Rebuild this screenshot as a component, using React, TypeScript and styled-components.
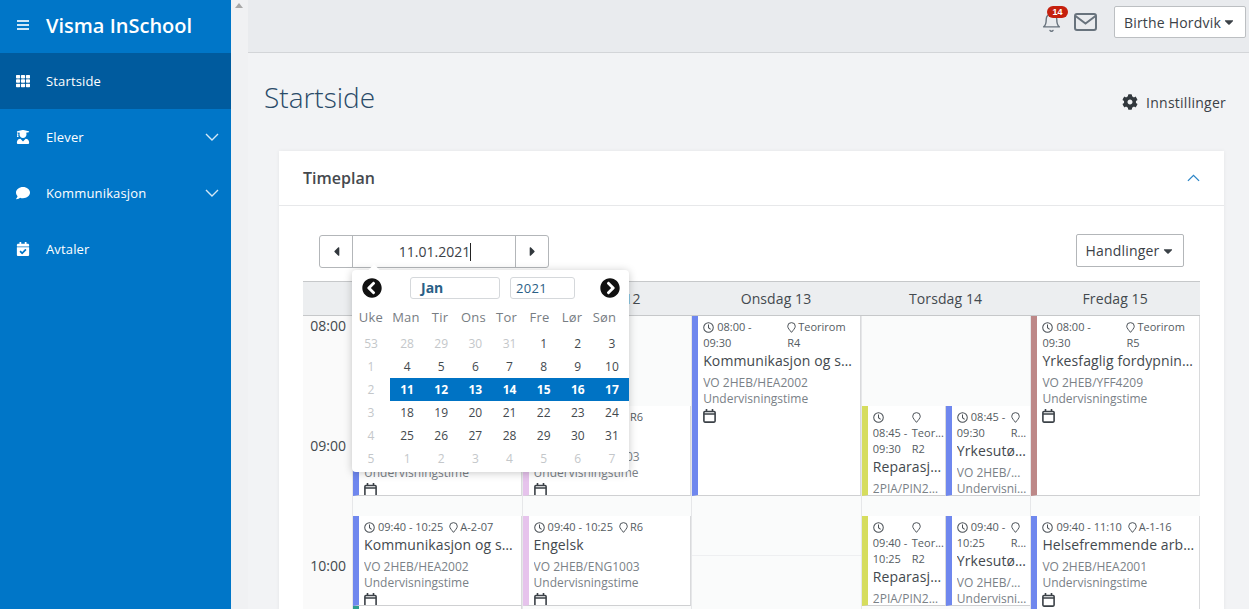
import React from "react";
import styled, { createGlobalStyle } from "styled-components";
import { FaTh, FaUserGraduate, FaComment, FaCalendarCheck, FaCog, FaChevronCircleLeft, FaChevronCircleRight, FaCaretDown, FaCaretLeft, FaCaretRight } from "react-icons/fa";
import { FiBell } from "react-icons/fi";

const GlobalStyle = createGlobalStyle`
  html, body { margin: 0; padding: 0; height: 100%; overflow: hidden; }
  body { font-family: "Open Sans", "Liberation Sans", sans-serif; color: #3b4147; background: #f2f3f5; }
  * { box-sizing: border-box; }
`;

const Shell = styled.div`display: flex; height: 609px; overflow: hidden;`;
const Sidebar = styled.nav`width: 231px; flex: none; background: #0076c8; color: #fff;`;
const Brand = styled.div`height: 53px; display: flex; align-items: center; padding: 0 0 3px 17px; gap: 17px; font-size: 20px; font-weight: 600;`;
const Burger = styled.span`
  width: 12px; height: 10px; display: block;
  border-top: 2px solid #cfe6f6; border-bottom: 2px solid #cfe6f6; position: relative;
  &::after { content: ""; position: absolute; left: 0; right: 0; top: 2px; height: 2px; background: #cfe6f6; }
`;
const NavItem = styled.div<{ $active?: boolean }>`
  height: 56px; display: flex; align-items: center; padding: 0 12px 0 16px; font-size: 13px; letter-spacing: .15px;
  background: ${(p) => (p.$active ? "#005b9e" : "transparent")};
`;
const NavIcon = styled.span`width: 14px; margin-right: 16px; display: flex; justify-content: center; font-size: 14px;`;
const NavLabel = styled.span`flex: 1;`;
const Track = styled.div`width: 17px; flex: none; background: #f0f1f3; padding: 3px 0 0 4px;`;
const TrackArrow = styled.span`display: block; width: 0; height: 0; border: 4px solid transparent; border-top: 0; border-bottom: 5px solid #a8a8a8;`;

const Main = styled.div`flex: 1; min-width: 0;`;
const TopBar = styled.header`height: 53px; background: #e9ebee; border-bottom: 1px solid #d3d5d8; display: flex; align-items: flex-start; justify-content: flex-end; padding: 6px 3px 0 0;`;
const BellWrap = styled.span`position: relative; width: 22px; margin-right: 11px; margin-top: 6px; color: #68737d; display: block; height: 24px;`;
const Badge = styled.span`position: absolute; top: -6px; left: 6px; width: 21px; height: 12px; border-radius: 6px; background: #c5200e; color: #fff; font: 700 9px/12px "Liberation Sans", sans-serif; text-align: center;`;
const MailIcon = styled.svg`width: 23px; height: 18px; margin: 7px 17px 0 0; fill: none; stroke: #68737d; stroke-width: 2;`;
const UserButton = styled.button`
  width: 132px; height: 32px; background: #fff; border: 1px solid #bcbfc2; border-radius: 2px; padding: 0;
  font: 500 14px "Open Sans", sans-serif; letter-spacing: .2px; color: #3b4147; display: flex; align-items: center; justify-content: center; gap: 1px;
`;
const PageHead = styled.div`height: 98px; display: flex; align-items: center; justify-content: space-between; padding: 0 23px 0 16px;`;
const PageTitle = styled.h1`margin: 0; padding-bottom: 10px; font-size: 28px; font-weight: 300; color: #2a4a68;`;
const Settings = styled.div`display: flex; align-items: center; gap: 8px; font-size: 14px; font-weight: 500; letter-spacing: .25px; color: #3b4147;`;

const Card = styled.section`margin: 0 25px 0 31px; background: #fff; box-shadow: 0 0 4px rgba(0,0,0,.06); height: 460px;`;
const CardHead = styled.div`height: 55px; border-bottom: 1px solid #e7e8ea; display: flex; align-items: center; justify-content: space-between; padding: 0 24px; font-size: 16px; font-weight: 600; color: #45494e;`;
const CardBody = styled.div`padding: 29px 24px 0; position: relative;`;
const Tools = styled.div`display: flex; justify-content: space-between; padding: 0 16px; height: 46px;`;
const DateNav = styled.div`display: flex; width: 230px; height: 33px; border: 1px solid #b3b6b9; border-radius: 3px;`;
const NavArrow = styled.span`width: 32px; display: flex; align-items: center; justify-content: center; font-size: 15px; color: #32383d;`;
const DateField = styled.span`flex: 1; border: solid #b3b6b9; border-width: 0 1px; display: flex; align-items: center; justify-content: center; padding-left: 2px; font-size: 14px; color: #3b4147;`;
const Caret = styled.span`display: inline-block; width: 1px; height: 18px; background: #222;`;
const ActionButton = styled.button`width: 108px; height: 33px; margin-top: -1px; background: #fff; border: 1px solid #b3b6b9; border-radius: 2px; padding: 0; font: 500 14px "Open Sans", sans-serif; letter-spacing: .2px; color: #3b4147; display: flex; align-items: center; justify-content: center; gap: 1px;`;

const Schedule = styled.div`display: grid; grid-template-columns: 49px repeat(5, 1fr); width: 897px;`;
const HeadCell = styled.div`height: 35px; background: #eceef0; border-top: 1px solid #c6c8ca; border-bottom: 1px solid #c6c8ca; display: flex; align-items: center; justify-content: center; font-size: 14px; letter-spacing: .1px; color: #43494e;`;
const TimeColumn = styled.div`height: 294px; background: #fafafa; overflow: hidden; display: flex; flex-direction: column; align-items: flex-end; padding: 0 6px 0 0;`;
const TimeLabel = styled.span`flex: none; height: 120px; font-size: 14px; line-height: 20px; color: #43494e;`;
const DayColumn = styled.div`
  height: 294px; position: relative; overflow: hidden; border-left: 1px solid #e6e7e9; background-color: #fafbfb;
  background-image: repeating-linear-gradient(to bottom, transparent 0, transparent 119px, #eeeff1 119px, #eeeff1 120px);
`;
const EventBox = styled.article<{ $color: string }>`
  position: absolute; overflow: hidden; background: #fff; border-left: 6px solid ${(p) => p.$color};
  border-right: 1px solid #d9dadc; border-bottom: 1px solid #cfd0d2; padding: 3px 2px 0 5px;
`;
const MetaRow = styled.div<{ $gap: number }>`display: flex; gap: ${(p) => p.$gap}px; font-size: 11px; line-height: 16px; color: #555c62;`;
const TimeBlock = styled.div<{ $width?: number }>`flex: ${(p) => (p.$width ? `0 0 ${p.$width}px` : "0 0 auto")}; min-width: 0;`;
const PlaceBlock = styled.div`flex: 1; min-width: 0;`;
const PlaceLine = styled.span`
  display: inline-block; white-space: nowrap; vertical-align: top;
  & + & { display: block; }
`;
const ClockIcon = styled.svg`width: 11px; height: 11px; margin-right: 3px; vertical-align: -1.5px; fill: none; stroke: #4a5056; stroke-width: 1.1;`;
const PinIcon = styled.svg`width: 9px; height: 11px; margin-right: 2px; vertical-align: -1.5px; fill: none; stroke: #4a5056; stroke-width: 1.1;`;
const EventTitle = styled.div`font-size: 14px; line-height: 20px; color: #43494e; white-space: nowrap; overflow: hidden; text-overflow: ellipsis; margin-bottom: 4px; letter-spacing: .1px;`;
const EventSub = styled.div`font-size: 12px; line-height: 16px; color: #7a8187; white-space: nowrap; overflow: hidden; text-overflow: ellipsis;`;
const CalIcon = styled.svg`display: block; width: 13px; height: 14px; margin-top: 2px; fill: none; stroke: #3b4147; stroke-width: 1.6;`;

const Popup = styled.div`position: absolute; left: 73px; top: 64px; width: 277px; height: 202px; background: #fff; border-radius: 4px; box-shadow: 0 1px 8px rgba(0,0,0,.22); z-index: 5; color: #43494e;
  &::before { content: ""; position: absolute; top: -4px; left: 18px; width: 8px; height: 8px; background: #fff; transform: rotate(45deg); }
`;
const PopHead = styled.div`height: 34px; display: flex; align-items: center; padding: 2px 8px 0 10px; font-size: 20px; color: #111;`;
const MonthBox = styled.span`flex: none; width: 90px; height: 22px; margin-left: 28px; border: 1px solid #d5d8db; border-radius: 3px; font-size: 14px; font-weight: 700; color: #2b5f86; line-height: 20px; padding-left: 10px;`;
const YearBox = styled.span`flex: none; width: 65px; height: 22px; margin-left: 10px; margin-right: 25px; border: 1px solid #d5d8db; border-radius: 3px; font-size: 13px; color: #2b5f86; line-height: 20px; padding-left: 5px; letter-spacing: .3px;`;
const WeekHead = styled.div`display: grid; grid-template-columns: 36px 34px 34px 33px 33px 33px 32px 33px; padding-left: 1px; height: 25px; align-items: center; font-size: 13px; letter-spacing: .25px; color: #777d83; text-align: center; padding-top: 1px;`;
const Weeks = styled.div`padding-top: 3px;`;
const WeekRow = styled.div`display: grid; grid-template-columns: 38px repeat(7, 1fr); height: 23px; align-items: center; text-align: center; font-size: 12px;`;
const WeekNo = styled.span`color: #c4c7ca;`;
const DayCell = styled.span<{ $muted?: boolean; $sel?: boolean }>`
  height: 23px; line-height: 23px;
  color: ${(p) => (p.$sel ? "#fff" : p.$muted ? "#c4c7ca" : "#43494e")};
  background: ${(p) => (p.$sel ? "#0073c4" : "transparent")};
  font-weight: ${(p) => (p.$sel ? 700 : 400)};
`;

const Chevron = ({ up, color, size = 14 }: { up?: boolean; color: string; size?: number }) => (
  <svg width={size} height={size * 0.6} viewBox="0 0 14 8" fill="none" stroke={color} strokeWidth="1.4">
    <path d={up ? "M1 7.2 7 1.2l6 6" : "M1 .8l6 6 6-6"} />
  </svg>
);
const Clock = () => (
  <ClockIcon viewBox="0 0 12 12"><circle cx="6" cy="6" r="5.2" /><path d="M6 2.6V6.2L8.3 8" /></ClockIcon>
);
const Pin = () => (
  <PinIcon viewBox="0 0 10 12"><path d="M5 11.4C3.2 9 .8 6.8.8 4.6a4.2 4 0 0 1 8.4 0C9.2 6.8 6.8 9 5 11.4z" /></PinIcon>
);
const Cal = () => (
  <CalIcon viewBox="0 0 13 14"><rect x=".9" y="2.5" width="11.2" height="10.6" rx="1" /><path d="M.9 5h11.2M3.5 0v3M9.5 0v3" /></CalIcon>
);

type Ev = { start: number; end: number; color: string; time: string; place: string[]; title: string; code: string; timeWidth?: number; gap?: number; left?: string; width?: string };
const BLUE = "#6f87ee";
const days: { name: string; events: Ev[] }[] = [
  { name: "Mandag 11", events: [
    { start: 45, end: 90, color: BLUE, time: "08:45 - 09:30", place: ["A-2-07"], title: "Kommunikasjon og samhandling", code: "VO 2HEB/HEA2002" },
    { start: 100, end: 145, color: BLUE, time: "09:40 - 10:25", place: ["A-2-07"], title: "Kommunikasjon og samhandling", code: "VO 2HEB/HEA2002" },
    { start: 145, end: 190, color: "#2f9e8f", time: "10:25 - 11:10", place: ["A-2-07"], title: "Kommunikasjon og samhandling", code: "VO 2HEB/HEA2002" },
  ] },
  { name: "Tirsdag 12", events: [
    { start: 45, end: 90, color: "#e6c3ec", time: "08:45 - 09:30", place: ["R6"], title: "Engelsk", code: "VO 2HEB/ENG1003" },
    { start: 100, end: 145, color: "#e6c3ec", time: "09:40 - 10:25", place: ["R6"], title: "Engelsk", code: "VO 2HEB/ENG1003" },
  ] },
  { name: "Onsdag 13", events: [
    { start: 0, end: 90, color: BLUE, time: "08:00 - 09:30", place: ["Teorirom", "R4"], title: "Kommunikasjon og samhandling", code: "VO 2HEB/HEA2002", timeWidth: 76, gap: 8 },
  ] },
  { name: "Torsdag 14", events: [
    { start: 45, end: 90, color: "#d6dd5e", time: "08:45 - 09:30", place: ["Teor...", "R2"], title: "Reparasjon av kjøretøy", code: "2PIA/PIN2001", timeWidth: 36, gap: 3, width: "84px" },
    { start: 45, end: 90, color: BLUE, time: "08:45 - 09:30", place: ["R..."], title: "Yrkesutøvelse", code: "VO 2HEB/...", timeWidth: 52, gap: 2, left: "84px", width: "86px" },
    { start: 100, end: 145, color: "#d6dd5e", time: "09:40 - 10:25", place: ["Teor...", "R2"], title: "Reparasjon av kjøretøy", code: "2PIA/PIN2001", timeWidth: 36, gap: 3, width: "84px" },
    { start: 100, end: 145, color: BLUE, time: "09:40 - 10:25", place: ["R..."], title: "Yrkesutøvelse", code: "VO 2HEB/...", timeWidth: 52, gap: 2, left: "84px", width: "86px" },
  ] },
  { name: "Fredag 15", events: [
    { start: 0, end: 90, color: "#bd8888", time: "08:00 - 09:30", place: ["Teorirom", "R5"], title: "Yrkesfaglig fordypning 2", code: "VO 2HEB/YFF4209", timeWidth: 76, gap: 8 },
    { start: 100, end: 190, color: BLUE, time: "09:40 - 11:10", place: ["A-1-16"], title: "Helsefremmende arbeid", code: "VO 2HEB/HEA2001" },
  ] },
];

const calendar: { week: number; days: [number, boolean][]; sel?: boolean }[] = [
  { week: 53, days: [[28, true], [29, true], [30, true], [31, true], [1, false], [2, false], [3, false]] },
  { week: 1, days: [4, 5, 6, 7, 8, 9, 10].map((d) => [d, false] as [number, boolean]) },
  { week: 2, sel: true, days: [11, 12, 13, 14, 15, 16, 17].map((d) => [d, false] as [number, boolean]) },
  { week: 3, days: [18, 19, 20, 21, 22, 23, 24].map((d) => [d, false] as [number, boolean]) },
  { week: 4, days: [25, 26, 27, 28, 29, 30, 31].map((d) => [d, false] as [number, boolean]) },
  { week: 5, days: [1, 2, 3, 4, 5, 6, 7].map((d) => [d, true] as [number, boolean]) },
];

export default function App() {
  return (
    <Shell>
      <GlobalStyle />
      <Sidebar>
        <Brand><Burger />Visma InSchool</Brand>
        <NavItem $active><NavIcon><FaTh /></NavIcon><NavLabel>Startside</NavLabel></NavItem>
        <NavItem><NavIcon><FaUserGraduate /></NavIcon><NavLabel>Elever</NavLabel><Chevron color="#d4e8f6" /></NavItem>
        <NavItem><NavIcon><FaComment /></NavIcon><NavLabel>Kommunikasjon</NavLabel><Chevron color="#d4e8f6" /></NavItem>
        <NavItem><NavIcon><FaCalendarCheck /></NavIcon><NavLabel>Avtaler</NavLabel></NavItem>
      </Sidebar>
      <Track><TrackArrow /></Track>
      <Main>
        <TopBar>
          <BellWrap><FiBell size={21} strokeWidth={1.6} /><Badge>14</Badge></BellWrap>
          <MailIcon viewBox="0 0 23 18"><rect x="1" y="1" width="21" height="16" rx="2" /><path d="M1.5 3l10 7.5 10-7.5" /></MailIcon>
          <UserButton>Birthe Hordvik<FaCaretDown size={14} /></UserButton>
        </TopBar>
        <PageHead>
          <PageTitle>Startside</PageTitle>
          <Settings><FaCog size={16} color="#32383d" />Innstillinger</Settings>
        </PageHead>
        <Card>
          <CardHead>Timeplan<Chevron up color="#2b85c7" size={13} /></CardHead>
          <CardBody>
            <Tools>
              <DateNav>
                <NavArrow><FaCaretLeft /></NavArrow>
                <DateField>11.01.2021<Caret /></DateField>
                <NavArrow><FaCaretRight /></NavArrow>
              </DateNav>
              <ActionButton>Handlinger<FaCaretDown size={14} /></ActionButton>
            </Tools>
            <Popup>
              <PopHead>
                <FaChevronCircleLeft />
                <MonthBox>Jan</MonthBox>
                <YearBox>2021</YearBox>
                <FaChevronCircleRight />
              </PopHead>
              <WeekHead>
                {["Uke", "Man", "Tir", "Ons", "Tor", "Fre", "Lør", "Søn"].map((d) => <span key={d}>{d}</span>)}
              </WeekHead>
              <Weeks>
                {calendar.map((w) => (
                  <WeekRow key={w.week}>
                    <WeekNo>{w.week}</WeekNo>
                    {w.days.map(([d, muted]) => <DayCell key={d} $muted={muted} $sel={w.sel}>{d}</DayCell>)}
                  </WeekRow>
                ))}
              </Weeks>
            </Popup>
            <Schedule>
              <HeadCell />
              {days.map((d) => <HeadCell key={d.name}>{d.name}</HeadCell>)}
              <TimeColumn>
                <TimeLabel>08:00</TimeLabel>
                <TimeLabel>09:00</TimeLabel>
                <TimeLabel>10:00</TimeLabel>
              </TimeColumn>
              {days.map((d) => (
                <DayColumn key={d.name}>
                  {d.events.map((e, i) => (
                    <EventBox
                      key={i}
                      $color={e.color}
                      style={{ top: e.start * 2, height: (e.end - e.start) * 2, left: e.left ?? 0, width: e.width ?? "100%" }}
                    >
                      <MetaRow $gap={e.gap ?? 6}>
                        <TimeBlock $width={e.timeWidth}><Clock />{e.time}</TimeBlock>
                        <PlaceBlock><Pin />{e.place.map((p) => <PlaceLine key={p}>{p}</PlaceLine>)}</PlaceBlock>
                      </MetaRow>
                      <EventTitle>{e.title}</EventTitle>
                      <EventSub>{e.code}</EventSub>
                      <EventSub>Undervisningstime</EventSub>
                      <Cal />
                    </EventBox>
                  ))}
                </DayColumn>
              ))}
            </Schedule>
          </CardBody>
        </Card>
      </Main>
    </Shell>
  );
}
